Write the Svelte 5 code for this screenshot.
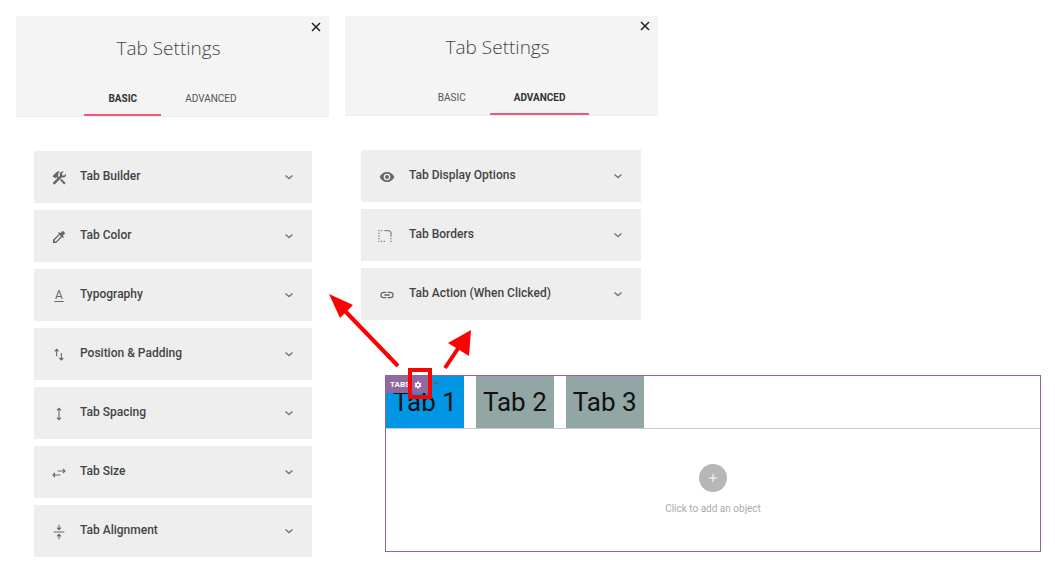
<script>
  const panels = [
    {
      id: 'basic',
      active: 'BASIC',
      rows: [
        { label: 'Tab Builder', icon: 'tools' },
        { label: 'Tab Color', icon: 'dropper' },
        { label: 'Typography', icon: 'type' },
        { label: 'Position & Padding', icon: 'position' },
        { label: 'Tab Spacing', icon: 'spacing' },
        { label: 'Tab Size', icon: 'size' },
        { label: 'Tab Alignment', icon: 'align' }
      ]
    },
    {
      id: 'advanced',
      active: 'ADVANCED',
      rows: [
        { label: 'Tab Display Options', icon: 'eye' },
        { label: 'Tab Borders', icon: 'border' },
        { label: 'Tab Action (When Clicked)', icon: 'link' }
      ]
    }
  ];
  const modes = ['BASIC', 'ADVANCED'];
  const tabs = ['Tab 1', 'Tab 2', 'Tab 3'];
</script>

{#snippet glyph(name)}
  <svg class="icon" viewBox="0 0 24 24" aria-hidden="true">
    {#if name === 'tools'}
      <path d="M2 9.500L8.500 3c1.500-1 3.500-1 5 0l-2.500 1.500.5 2.500-1.500 2 2.200 2.200-1.800 1.800-2.200-2.200-1.700 1.500zM13.500 15l2-2 6.500 6.500-2.300 2.300z" />
      <path d="M22.500 5.500l-3 3-2.500-.8-.7-2.400 3-3c-2.500-.8-5.300.6-6 3-.3 1 0 2 .3 2.900L2.500 19.500l2.500 2.500L16.300 10.900c3.700 1.400 7.300-1.700 6.200-5.400z" />
    {:else if name === 'dropper'}
      <path d="M20.710 5.630l-2.340-2.340a1 1 0 0 0-1.410 0l-3.120 3.120L12 4.500l-1.420 1.420L12 7.330l-9 8.920V21h4.750l8.920-8.920 1.420 1.420 1.410-1.410-1.920-1.920 3.120-3.120c.4-.4.4-1.030.01-1.420zM6.920 19L5 17.080l8.060-8.060 1.920 1.920z" />
    {:else if name === 'type'}
      <text x="12" y="17" text-anchor="middle">A</text>
      <path d="M5 19.500h14V21H5z" />
    {:else if name === 'position'}
      <path class="line" d="M8.500 14V3.500M5.500 6.500l3-3 3 3M15.500 9v10.500M12.500 16.500l3 3 3-3" />
    {:else if name === 'spacing'}
      <path class="line" d="M12 3.500v17M9 6.500l3-3 3 3M9 17.500l3 3 3-3" />
    {:else if name === 'size'}
      <path class="line" d="M10 9h11M18 6l3 3-3 3M14 15H3M6 12l-3 3 3 3" />
    {:else if name === 'align'}
      <path class="line" d="M4 12h16M12 1v7M9 5.500l3 3 3-3M12 23v-7M9 18.500l3-3 3 3" />
    {:else if name === 'eye'}
      <path d="M12 4.500C7 4.500 2.730 7.610 1 12c1.730 4.390 6 7.500 11 7.500s9.270-3.110 11-7.500c-1.730-4.390-6-7.500-11-7.500zM12 17a5 5 0 1 1 0-10 5 5 0 0 1 0 10zm0-8a3 3 0 1 0 0 6 3 3 0 0 0 0-6z" />
    {:else if name === 'border'}
      <path class="soft" d="M17 19h2v2h-2zM17 15h2v2h-2zM-1 11h2v2h-2zM-1 15h2v2h-2zM-1 7h2v2h-2zM-1 3h2v2h-2zM3 3h2v2H3zM7 19h2v2H7zM3 19h2v2H3zM-1 19h2v2h-2zM19 8c0-2.760-2.240-5-5-5H8v2h6c1.650 0 3 1.350 3 3v5h2z" />
    {:else if name === 'link'}
      <path d="M3.900 12c0-1.710 1.390-3.100 3.100-3.100h4V7H7a5 5 0 0 0 0 10h4v-1.900H7c-1.710 0-3.100-1.390-3.100-3.100zM8 13h8v-2H8zM17 7h-4v1.900h4a3.100 3.100 0 0 1 0 6.200h-4V17h4a5 5 0 0 0 0-10z" />
    {/if}
  </svg>
{/snippet}

{#snippet panel(p)}
  <section class="panel {p.id}">
    <header>
      <button class="close" aria-label="Close">
        <svg viewBox="0 0 10 10" aria-hidden="true"><path d="M1 1l8 8M9 1L1 9" /></svg>
      </button>
      <h2>Tab Settings</h2>
      <nav>
        {#each modes as m}
          <button class:active={m === p.active}>{m}</button>
        {/each}
      </nav>
    </header>
    <div class="rows">
      {#each p.rows as r}
        <button class="row">
          {@render glyph(r.icon)}
          <span>{r.label}</span>
          <svg class="chevron" viewBox="0 0 12 12" aria-hidden="true"><path d="M2.500 4.500L6 7.500l3.500-3" /></svg>
        </button>
      {/each}
    </div>
  </section>
{/snippet}

<main>
  {@render panel(panels[0])}
  <div class="side">
    {@render panel(panels[1])}
    <section class="canvas">
      <div class="tabs">
        {#each tabs as t, i}
          <button class:current={i === 0}>{t}</button>
        {/each}
      </div>
      <div class="drop">
        <button class="add" aria-label="Add an object">
          <svg viewBox="0 0 12 12" aria-hidden="true"><path d="M6 2v8M2 6h8" /></svg>
        </button>
        <p>Click to add an object</p>
      </div>
      <div class="badge">
        <span>TABS</span>
        <button aria-label="Tab settings">
          <svg viewBox="0 0 24 24" aria-hidden="true">
            <path fill-rule="evenodd" d="M19.400 13c.1-.7.1-1.300 0-2l2.600-2-2.500-4.300-3 1.200a8 8 0 0 0-1.700-1L14.300 1.500h-5L8.900 4.900a8 8 0 0 0-1.700 1l-3-1.200L1.700 9l2.600 2a8 8 0 0 0 0 2l-2.600 2 2.500 4.300 3-1.200 1.700 1 .4 3.400h5l.5-3.400 1.700-1 3 1.200L22 15zM12 15.500a3.500 3.500 0 1 1 0-7 3.500 3.500 0 0 1 0 7z" />
          </svg>
        </button>
      </div>
      <svg class="arrows" viewBox="0 0 160 120" aria-hidden="true">
        <path class="caret" d="M107 96h7l-3 3z" />
        <path class="shaft" d="M73 80L20 25M120 82l14-21" />
        <path class="head" d="M4 8l24 11-13 13zM146 44l-2 26-21-13z" />
        <rect x="85" y="84" width="20" height="27" />
      </svg>
    </section>
  </div>
</main>

<style>
  :global(body) {
    margin: 0;
    background: #fff;
    font-family: Roboto, 'Liberation Sans', sans-serif;
  }
  button {
    border: 0;
    margin: 0;
    padding: 0;
    background: none;
    font: inherit;
    color: inherit;
  }
  main {
    display: grid;
    grid-template-columns: 313fr 696fr;
    gap: 16px;
    padding: 16px 14px 16px 16px;
  }
  header {
    position: relative;
    box-sizing: border-box;
    height: 101px;
    display: flex;
    flex-direction: column;
    background: #f4f4f4;
    border-bottom: 1px solid #eee;
  }
  h2 {
    margin: 0;
    padding: 18px 8px 0 0;
    font: 300 19px/28px 'Open Sans', sans-serif;
    color: #444;
    text-align: center;
  }
  nav {
    display: flex;
    justify-content: center;
    margin-top: auto;
  }
  nav button {
    padding: 0 24px;
    font-size: 10px;
    line-height: 30px;
    color: #555;
    border-bottom: 2px solid transparent;
  }
  nav .active {
    font-weight: 700;
    color: #333;
    border-color: #f9557c;
  }
  .close {
    position: absolute;
    top: 6px;
    right: 8px;
    width: 10px;
    height: 10px;
    display: flex;
  }
  .close svg {
    width: 10px;
    stroke: #222;
    stroke-width: 1.5;
    fill: none;
  }
  .rows {
    display: flex;
    flex-direction: column;
    gap: 7px;
    padding: 34px 17px 0 18px;
  }
  .advanced {
    width: 45%;
  }
  .advanced header {
    height: 100px;
  }
  .advanced h2 {
    padding-top: 17px;
  }
  .advanced .close {
    top: 5px;
  }
  .advanced .rows {
    padding-left: 16px;
  }
  .row {
    display: flex;
    align-items: center;
    height: 52px;
    padding: 0 17px;
    background: #eee;
    color: #444;
    font-size: 12px;
    font-weight: 500;
    line-height: 16px;
    text-align: left;
  }
  .row span {
    flex: 1;
    padding: 0 0 2px 13px;
  }
  .advanced .row {
    padding-left: 18px;
  }
  .advanced .row span {
    padding-left: 14px;
  }
  .icon {
    width: 16px;
    height: 16px;
    margin-top: 2px;
    fill: #666;
    overflow: visible;
  }
  .icon text {
    font-size: 18px;
    font-weight: 400;
  }
  .icon .soft {
    fill: #888;
  }
  .icon .line {
    fill: none;
    stroke: #666;
    stroke-width: 1.6;
  }
  .chevron {
    width: 12px;
    height: 12px;
    fill: none;
    stroke: #777;
    stroke-width: 1.5;
  }
  .side {
    min-width: 0;
  }
  .canvas {
    position: relative;
    margin: 55px 0 0 40px;
    border: 1px solid #8f659e;
  }
  .tabs {
    display: flex;
    gap: 12px;
    border-bottom: 1px solid #ccc;
  }
  .tabs button {
    padding: 0 7px;
    font-size: 26px;
    line-height: 52px;
    color: #111;
    background: #92a6a5;
  }
  .tabs .current {
    background: #0096e4;
  }
  .drop {
    display: flex;
    flex-direction: column;
    align-items: center;
    gap: 9px;
    padding: 35px 0 34px;
  }
  .add {
    display: grid;
    place-items: center;
    width: 28px;
    height: 28px;
    border-radius: 50%;
    background: #b8b7b8;
  }
  .add svg {
    width: 12px;
    stroke: #fff;
    stroke-width: 1;
  }
  .drop p {
    margin: 0;
    font-size: 10px;
    line-height: 16px;
    color: #aaa;
  }
  .badge {
    position: absolute;
    top: 0;
    left: 0;
    display: flex;
    align-items: center;
    gap: 4px;
    height: 17px;
    padding: 0 10px 0 4px;
    background: #92699e;
    color: #fff;
    font-size: 8px;
    font-weight: 700;
  }
  .badge button {
    display: flex;
  }
  .badge svg {
    width: 8px;
    height: 8px;
    fill: #fff;
  }
  .arrows {
    position: absolute;
    top: -90px;
    left: -61px;
    width: 160px;
    height: 120px;
    pointer-events: none;
  }
  .shaft,
  .arrows rect {
    fill: none;
    stroke: #f00;
    stroke-width: 4;
  }
  .head {
    fill: #f00;
  }
  .caret {
    fill: #5f6470;
  }
</style>
